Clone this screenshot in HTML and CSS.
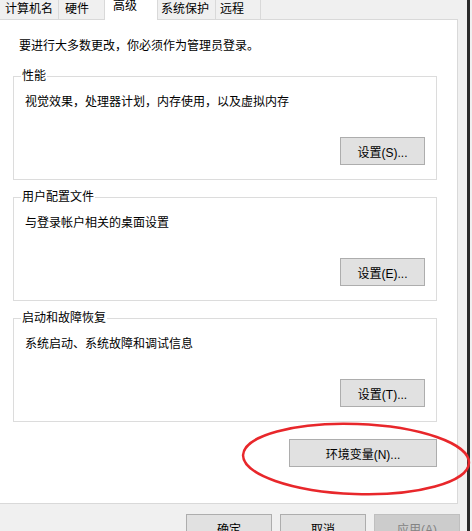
FILE: index.html
```html
<html>

<head>
  <meta charset="UTF-8" />
  <title>系统属性</title>
  <link rel="stylesheet" href="styles.css">
</head>

<body>
  <div class="window">
    <div class="dialog">
      <div class="tabs">
        <div class="tab">计算机名</div>
        <div class="tab">硬件</div>
        <div class="tab tab-active">高级</div>
        <div class="tab">系统保护</div>
        <div class="tab">远程</div>
      </div>

      <div class="panel">
        <p class="intro">要进行大多数更改，你必须作为管理员登录。</p>

        <fieldset class="group">
          <legend>性能</legend>
          <p class="desc">视觉效果，处理器计划，内存使用，以及虚拟内存</p>
          <div class="actions"><button class="btn">设置(S)...</button></div>
        </fieldset>

        <fieldset class="group">
          <legend>用户配置文件</legend>
          <p class="desc">与登录帐户相关的桌面设置</p>
          <div class="actions"><button class="btn">设置(E)...</button></div>
        </fieldset>

        <fieldset class="group">
          <legend>启动和故障恢复</legend>
          <p class="desc">系统启动、系统故障和调试信息</p>
          <div class="actions"><button class="btn">设置(T)...</button></div>
        </fieldset>

        <div class="env-row">
          <button class="btn btn-env">环境变量(N)...</button>
        </div>
      </div>

      <div class="footer">
        <button class="btn btn-footer">确定</button>
        <button class="btn btn-footer">取消</button>
        <button class="btn btn-footer btn-disabled" disabled>应用(A)</button>
      </div>
    </div>
    <div class="edge"></div>
  </div>

  <!-- 红色圈注 -->
  <svg class="mark" width="472" height="531" viewBox="0 0 472 531">
    <ellipse cx="356" cy="459" rx="113" ry="35" transform="rotate(2 356 459)" />
  </svg>
</body>

</html>
```

FILE: styles.css
```css
* {
  margin: 0;
  padding: 0;
  box-sizing: border-box;
}

html,
body {
  width: 100%;
  height: 100%;
  overflow: hidden;
  background-color: #f0f0f0;
}

body {
  font-family: "Liberation Sans", "Noto Sans CJK SC", sans-serif;
  font-size: 12px;
  color: #000;
}

.window {
  display: flex;
  height: 100%;
}

.dialog {
  width: 467px;
  flex: none;
}

.edge {
  width: 3px;
  flex: none;
  background-color: #2b2b2b;
}

/* 选项卡 */
.tabs {
  display: flex;
  align-items: flex-end;
  height: 19px;
}

.tab {
  height: 19px;
  line-height: 18px;
  white-space: nowrap;
  border-right: 1px solid #d9d9d9;
}

.tab:nth-child(1) {
  width: 59px;
  padding-left: 5px;
}

.tab:nth-child(2) {
  width: 45px;
  padding-left: 6px;
  border-right: none;
}

.tab:nth-child(4) {
  width: 58px;
  padding-left: 3px;
}

.tab:nth-child(5) {
  width: 45px;
  padding-left: 4px;
}

.tab-active {
  position: relative;
  z-index: 1;
  width: 54px;
  height: 20px;
  margin-bottom: -1px;
  padding-left: 8px;
  line-height: 13px;
  background-color: #fff;
  border-left: 1px solid #d9d9d9;
}

/* 面板 */
.panel {
  width: 458px;
  height: 485px;
  padding: 18px 20px 0 13px;
  background-color: #fff;
  border-top: 1px solid #d9d9d9;
  border-right: 1px solid #d9d9d9;
  border-bottom: 1px solid #d9d9d9;
}

.intro {
  line-height: 16px;
  padding-left: 6px;
  margin-bottom: 14px;
}

.group {
  border: 1px solid #dcdcdc;
  padding: 9px 11px 14px 11px;
  margin-bottom: 9px;
}

.group legend {
  margin-left: -4px;
  padding: 0 1px;
  line-height: 17px;
}

.desc {
  line-height: 16px;
  margin-bottom: 27px;
}

.actions,
.env-row {
  display: flex;
  justify-content: flex-end;
}

.env-row {
  margin-top: 17px;
}

.btn {
  width: 85px;
  height: 28px;
  font: inherit;
  color: #000;
  background-color: #e1e1e1;
  border: 1px solid #adadad;
}

.btn-env {
  width: 148px;
}

/* 底部按钮 */
.footer {
  display: flex;
  justify-content: flex-end;
  gap: 8px;
  padding: 10px 7px 0 0;
}

.btn-footer {
  width: 86px;
}

.btn-disabled {
  color: #838383;
  background-color: #cccccc;
  border-color: #bfbfbf;
}

.mark {
  position: absolute;
  top: 0;
  left: 0;
  pointer-events: none;
}

.mark ellipse {
  fill: none;
  stroke: #e8272b;
  stroke-width: 2.5;
}
```
